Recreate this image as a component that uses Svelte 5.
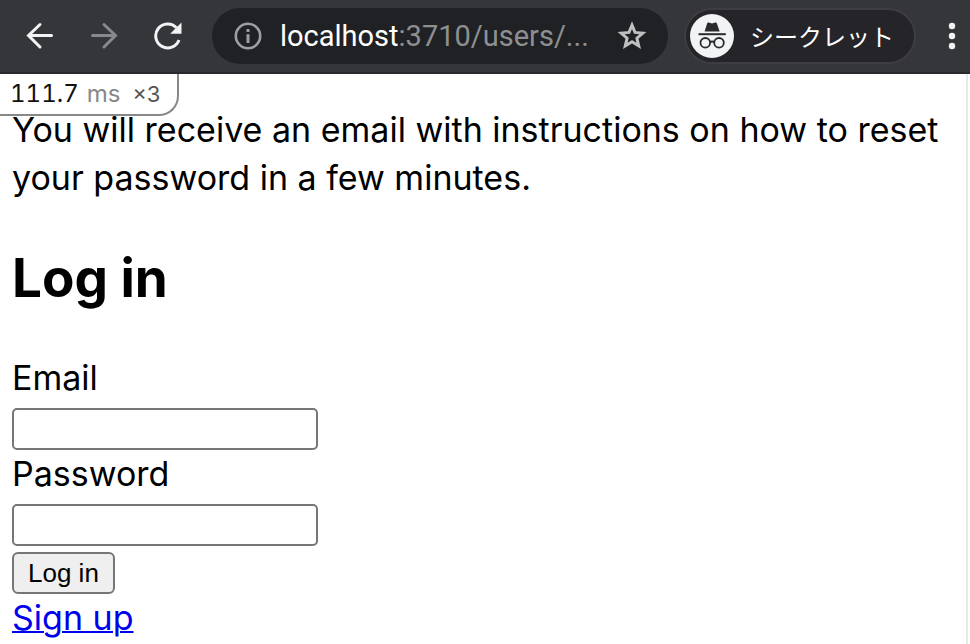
<script lang="ts">
	let email = '';
	let password = '';

	const notice =
		'You will receive an email with instructions on how to reset your password in a few minutes.';
	const profiler = { time: '111.7', unit: 'ms', count: 3 };
</script>

<div class="browser">
	<header class="toolbar">
		<nav class="nav" aria-label="History">
			<button type="button" class="icon" aria-label="Back">
				<svg width="28" height="28" viewBox="0 0 28 28">
					<path d="M25.5 13.5H2.5M14 2.5L2.5 13.5l11.5 11.5" />
				</svg>
			</button>
			<button type="button" class="icon dim" aria-label="Forward">
				<svg width="28" height="28" viewBox="0 0 28 28">
					<path d="M2.5 13.5h23M14 2.5l11.5 11-11.5 11.5" />
				</svg>
			</button>
			<button type="button" class="icon" aria-label="Reload">
				<svg width="28" height="28" viewBox="0 0 28 28">
					<path class="arc" d="M25 18A12 12 0 1 1 22.5 5.7" />
					<path class="solid" d="M27.5 .5v11.3H16.2z" />
				</svg>
			</button>
		</nav>

		<div class="omnibox">
			<button type="button" class="icon" aria-label="Site information">
				<svg width="28" height="28" viewBox="0 0 28 28">
					<circle class="ring" cx="14" cy="14" r="12.2" />
					<path class="info" d="M12.5 7h3v3h-3zM12.5 12.2h3V21h-3z" />
				</svg>
			</button>
			<div class="url" role="textbox" tabindex="0" aria-label="Address" contenteditable="true">
				<span class="host">localhost</span>:3710/users/...
			</div>
			<button type="button" class="icon" aria-label="Bookmark">
				<svg width="30" height="30" viewBox="0 0 30 30">
					<path
						class="star"
						d="M15 4.2l3 7.2 7.8.7-5.9 5.1 1.8 7.6L15 20.8l-6.7 4 1.8-7.6-5.9-5.1 7.8-.7z"
					/>
				</svg>
			</button>
		</div>

		<button type="button" class="incognito">
			<svg width="44" height="44" viewBox="0 0 44 44" aria-hidden="true">
				<circle cx="22" cy="22" r="22" fill="#f1f3f4" />
				<path
					d="M17.2 9.2q.4-1 1.5-.7l3.3.9 3.3-.9q1.1-.3 1.5.7L29.7 17.5H14.6z"
					fill="#29292e"
				/>
				<path d="M8.5 20.2h27.3" stroke="#29292e" stroke-width="2" />
				<g fill="none" stroke="#29292e" stroke-width="1.8">
					<circle cx="15.3" cy="28.8" r="4.8" />
					<circle cx="29" cy="28.8" r="4.8" />
					<path d="M20 28.3q2.2-1.6 4.3 0" />
				</g>
			</svg>
			<span>シークレット</span>
		</button>

		<button type="button" class="icon menu" aria-label="Menu">
			<svg width="8" height="28" viewBox="0 0 8 28">
				<circle cx="4" cy="4" r="3.2" />
				<circle cx="4" cy="14" r="3.2" />
				<circle cx="4" cy="24" r="3.2" />
			</svg>
		</button>
	</header>

	<main class="page">
		<div class="profiler">
			<span>{profiler.time}</span>
			<span class="unit">{profiler.unit}</span>
			<span class="count">×{profiler.count}</span>
		</div>

		<p class="notice">{notice}</p>

		<h2>Log in</h2>

		<form on:submit|preventDefault>
			<div class="field">
				<label for="email">Email</label>
				<input id="email" type="email" bind:value={email} />
			</div>
			<div class="field">
				<label for="password">Password</label>
				<input id="password" type="password" bind:value={password} />
			</div>
			<button type="submit" class="submit">Log in</button>
		</form>

		<a href="/users/sign_up">Sign up</a>
	</main>
</div>

<style>
	:global(body) {
		margin: 0;
		background: #fff;
	}

	.browser {
		display: flex;
		flex-direction: column;
		min-height: 100vh;
		font-family: Inter, 'Noto Sans CJK JP', sans-serif;
		color: #000;
	}

	.toolbar {
		display: flex;
		align-items: center;
		box-sizing: border-box;
		height: 74px;
		padding: 0 14px 0 26px;
		border-bottom: 2px solid #28292c;
		background: #35363a;
	}

	.nav {
		display: flex;
		gap: 36px;
		margin-right: 30px;
	}

	.icon {
		display: flex;
		padding: 0;
		border: 0;
		background: none;
		color: #f1f3f4;
	}

	.icon path {
		fill: none;
		stroke: currentColor;
		stroke-width: 3;
		stroke-linecap: round;
	}

	.icon .arc {
		stroke-linecap: butt;
	}

	.icon .solid,
	.icon .info {
		fill: currentColor;
		stroke: none;
	}

	.dim {
		color: #88898c;
	}

	.omnibox {
		display: flex;
		flex: 1;
		align-items: center;
		min-width: 0;
		height: 56px;
		box-sizing: border-box;
		padding: 0 21px 0 22px;
		border-radius: 28px;
		background: #202124;
	}

	.omnibox .icon {
		color: #9aa0a6;
	}

	.omnibox .icon:last-child {
		color: #bdc1c0;
	}

	.ring {
		fill: none;
		stroke: currentColor;
		stroke-width: 2.6;
	}

	.icon .star {
		stroke-linecap: butt;
	}

	.url {
		flex: 1;
		min-width: 0;
		margin: 0 18px;
		overflow: hidden;
		outline: none;
		font-family: Roboto, sans-serif;
		font-size: 29px;
		line-height: 40px;
		white-space: nowrap;
		color: #8e8f91;
	}

	.host {
		color: #fff;
	}

	.incognito {
		display: flex;
		align-items: center;
		gap: 16px;
		height: 56px;
		margin: 0 32px 0 16px;
		padding: 0 20px 0 4px;
		box-sizing: border-box;
		border: 2px solid #3e3d43;
		border-radius: 28px;
		background: #252428;
		color: #fff;
		font-family: 'Noto Sans CJK JP', sans-serif;
		font-size: 24px;
		line-height: 32px;
		white-space: nowrap;
	}

	.menu circle {
		fill: currentColor;
	}

	.page {
		position: relative;
		flex: 1;
		margin-right: 2px;
		padding: 32px 12px 0;
		border-right: 2px solid #e8e8e8;
		font-size: 34px;
		line-height: 48px;
	}

	.profiler {
		position: absolute;
		top: 0;
		left: 0;
		display: flex;
		align-items: baseline;
		padding: 0 16px 0 10px;
		border: 2px solid #888;
		border-width: 0 2px 2px 0;
		border-bottom-right-radius: 20px;
		background: #fff;
		color: #111;
		font-size: 24px;
		font-variant-numeric: tabular-nums;
		line-height: 40px;
	}

	.unit {
		margin: 0 12px 0 8px;
		color: #888;
	}

	.count {
		color: #555;
		font-size: 22px;
	}

	.notice {
		margin: 0;
	}

	h2 {
		margin: 40px 0;
		font-size: 53px;
		font-weight: 700;
		line-height: 72px;
	}

	.field {
		display: flex;
		flex-direction: column;
		align-items: flex-start;
	}

	input {
		box-sizing: border-box;
		width: 306px;
		max-width: 100%;
		height: 42px;
		margin: 6px 0 0;
		padding: 2px 4px;
		border: 2px solid #767676;
		border-radius: 5px;
		background: #fff;
		font: inherit;
		font-size: 26px;
	}

	.submit {
		display: block;
		height: 42px;
		margin: 6px 0 0;
		padding: 0 14px;
		border: 2px solid #767676;
		border-radius: 6px;
		background: #efefef;
		color: #000;
		font-family: 'Liberation Sans', sans-serif;
		font-size: 26px;
	}

	a {
		color: #00e;
		text-decoration-thickness: 2px;
	}
</style>
